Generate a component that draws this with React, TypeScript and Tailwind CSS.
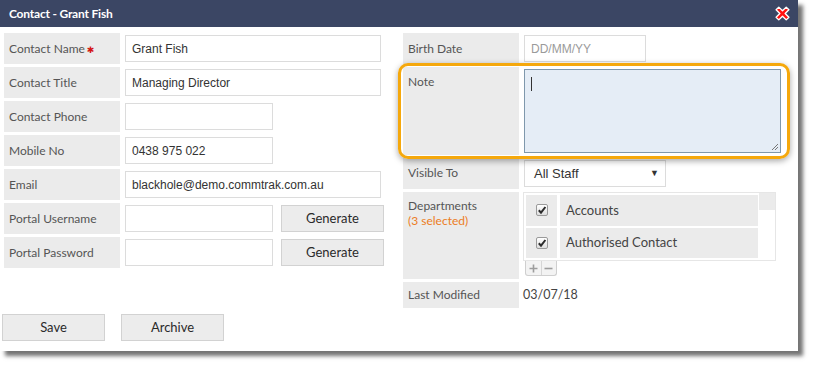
import React from "react";

const lato = "font-['Lato','Liberation_Sans',sans-serif]";
const arial = "font-['Liberation_Sans',Arial,sans-serif]";

function Label({ children, className = "" }: { children: React.ReactNode; className?: string }) {
  return (
    <div className={`w-[116px] shrink-0 bg-[#ebebeb] pl-[5px] text-[12px] text-[#555] ${lato} ${className}`}>
      {children}
    </div>
  );
}

function Input({ value, w, placeholder }: { value?: string; w: string; placeholder?: string }) {
  return (
    <div
      className={`ml-[5px] mt-[2px] h-[27px] ${w} border border-[#dcdcdc] bg-white px-[6px] flex items-center text-[12px] ${arial} ${
        value ? "text-[#333]" : "text-[#9a9a9a]"
      }`}
    >
      {value ?? placeholder ?? ""}
    </div>
  );
}

function Btn({ children, w, className = "" }: { children: React.ReactNode; w: string; className?: string }) {
  return (
    <div
      className={`${w} h-[27px] border border-[#d2d2d2] bg-[#ececec] flex items-center justify-center text-[13px] text-[#2a2a2a] ${lato} ${className}`}
    >
      {children}
    </div>
  );
}

function Check() {
  return (
    <div className="w-[12px] h-[12px] border border-[#9a9a9a] rounded-[2px] bg-gradient-to-b from-white to-[#dedede] flex items-center justify-center">
      <svg width="10" height="10" viewBox="0 0 10 10">
        <path d="M1.8 5.2 L4 7.6 L8.4 2" fill="none" stroke="#2b2b2b" strokeWidth="2" />
      </svg>
    </div>
  );
}

function DeptRow({ name }: { name: string }) {
  return (
    <div className="flex gap-[3px] h-[31px]">
      <div className="w-[31px] bg-[#ebebeb] flex items-center justify-center">
        <Check />
      </div>
      <div className={`w-[198px] bg-[#ebebeb] pl-[6px] flex items-center text-[13px] text-[#444] ${lato}`}>{name}</div>
    </div>
  );
}

export default function App() {
  return (
    <div className="w-[813px] h-[366px] bg-white">
      <div className="relative w-[798px] h-[351px] bg-white flex flex-col shadow-[5px_5px_4px_rgba(0,0,0,0.55)]">
        {/* Title bar */}
        <div className="h-[27px] bg-[#3b4664] flex items-center justify-between pl-[9px] pr-[7px]">
          <span className={`text-white font-bold text-[12px] tracking-[-0.2px] ${lato}`}>Contact - Grant Fish</span>
          <svg width="17" height="17" viewBox="0 0 16 16">
            <polygon
              points="2,4.5 4.5,2 8,5.5 11.5,2 14,4.5 10.5,8 14,11.5 11.5,14 8,10.5 4.5,14 2,11.5 5.5,8"
              fill="#ff1010"
              stroke="#ffffff"
              strokeWidth="1.3"
              strokeLinejoin="round"
            />
          </svg>
        </div>

        {/* Body */}
        <div className="flex">
          {/* Left column */}
          <div className="w-[399px] pl-[4px] pt-[6px] flex flex-col gap-[3px]">
            <div className="flex h-[31px]">
              <Label className="flex items-center">
                Contact Name
                <span className={`ml-[2px] text-[#d41414] text-[9px] font-bold relative top-[2px] font-['DejaVu_Sans',sans-serif]`}>✱</span>
              </Label>
              <Input value="Grant Fish" w="w-[256px]" />
            </div>
            <div className="flex h-[31px]">
              <Label className="flex items-center">Contact Title</Label>
              <Input value="Managing Director" w="w-[256px]" />
            </div>
            <div className="flex h-[31px]">
              <Label className="flex items-center">Contact Phone</Label>
              <Input w="w-[148px]" />
            </div>
            <div className="flex h-[31px]">
              <Label className="flex items-center">Mobile No</Label>
              <Input value="0438 975 022" w="w-[148px]" />
            </div>
            <div className="flex h-[31px]">
              <Label className="flex items-center">Email</Label>
              <Input value="blackhole@demo.commtrak.com.au" w="w-[256px]" />
            </div>
            <div className="flex h-[31px]">
              <Label className="flex items-center">Portal Username</Label>
              <Input w="w-[148px]" />
              <Btn w="w-[103px]" className="ml-[8px] mt-[2px]">Generate</Btn>
            </div>
            <div className="flex h-[31px]">
              <Label className="flex items-center">Portal Password</Label>
              <Input w="w-[148px]" />
              <Btn w="w-[103px]" className="ml-[8px] mt-[2px]">Generate</Btn>
            </div>
          </div>

          {/* Right column */}
          <div className="flex-1 pl-[4px] pt-[6px] flex flex-col gap-[3px]">
            <div className="flex h-[31px]">
              <Label className="flex items-center">Birth Date</Label>
              <Input placeholder="DD/MM/YY" w="w-[122px]" />
            </div>
            <div className="flex h-[88px]">
              <Label className="pt-[6px]">Note</Label>
              <div className="relative ml-[5px] mt-[2px] w-[257px] h-[84px] border border-[#7f98ac] bg-[#e5edf6]">
                <div className="absolute left-[6px] top-[7px] w-[1px] h-[14px] bg-[#333]" />
                <svg className="absolute right-[1px] bottom-[1px]" width="9" height="9" viewBox="0 0 9 9">
                  <path d="M8 2 L2 8 M8 5 L5 8" stroke="#777" strokeWidth="1" />
                </svg>
              </div>
            </div>
            <div className="flex h-[31px]">
              <Label className="pt-[6px]">Visible To</Label>
              <div
                className={`ml-[5px] mt-[2px] w-[142px] h-[27px] border border-[#dcdcdc] bg-white pl-[9px] pr-[6px] flex items-center justify-between text-[13px] text-[#333] ${arial}`}
              >
                <span>All Staff</span>
                <span className="text-[9px] text-[#333]">▼</span>
              </div>
            </div>
            <div className="flex h-[87px]">
              <Label className="pt-[6px] leading-[15px]">
                <div>Departments</div>
                <div className="text-[#ec7d1e]">(3 selected)</div>
              </Label>
              <div className="ml-[4px] flex flex-col">
                <div className="relative w-[253px] h-[69px] border border-[#e6e6e6] bg-white p-[2px] flex flex-col gap-[2px]">
                  <DeptRow name="Accounts" />
                  <DeptRow name="Authorised Contact" />
                  <div className="absolute top-0 right-0 w-[16px] h-[17px] bg-[#ebebeb]" />
                </div>
                <div className="ml-[2px] w-[32px] h-[15px] border border-t-0 border-[#cfcfcf] rounded-b-[3px] bg-[#f3f3f3] flex">
                  <div className="flex-1 border-r border-[#d6d6d6] flex items-center justify-center">
                    <svg width="9" height="9" viewBox="0 0 9 9">
                      <path d="M4.5 0.5 V8.5 M0.5 4.5 H8.5" stroke="#9d9d9d" strokeWidth="1.6" />
                    </svg>
                  </div>
                  <div className="flex-1 flex items-center justify-center">
                    <svg width="9" height="9" viewBox="0 0 9 9">
                      <path d="M0.5 4.5 H8.5" stroke="#9d9d9d" strokeWidth="1.6" />
                    </svg>
                  </div>
                </div>
              </div>
            </div>
            <div className="flex h-[26px]">
              <Label className="flex items-center">Last Modified</Label>
              <div className={`ml-[4px] flex items-center text-[12.5px] text-[#444] ${lato}`}>03/07/18</div>
            </div>
          </div>
        </div>

        {/* Footer */}
        <div className="mt-auto pb-[10px] pl-[2px] flex gap-[16px]">
          <Btn w="w-[103px]">Save</Btn>
          <Btn w="w-[103px]">Archive</Btn>
        </div>

        {/* Highlight overlay */}
        <div className="absolute left-[398px] top-[63px] w-[392px] h-[96px] border-[3px] border-[#f5a80c] rounded-[10px] shadow-[0_2px_6px_rgba(0,0,0,0.35)] pointer-events-none" />
      </div>
    </div>
  );
}
